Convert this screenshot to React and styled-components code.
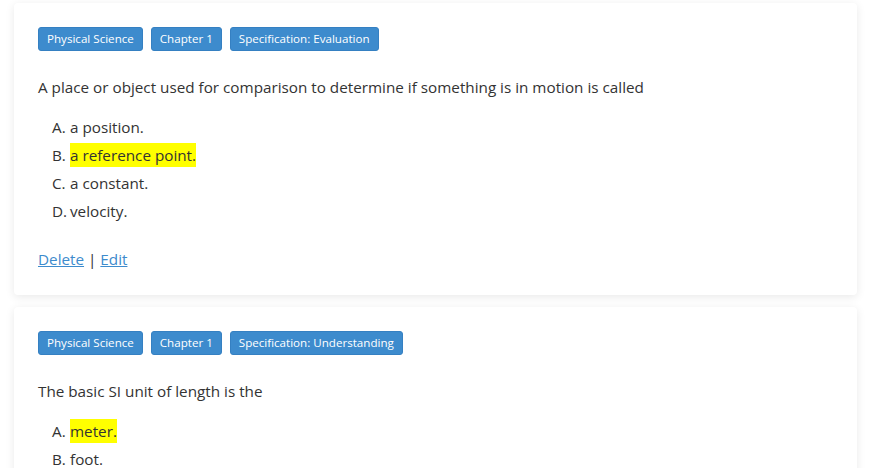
import React from 'react'
import styled, { createGlobalStyle } from 'styled-components'

const GlobalStyle = createGlobalStyle`
  body {
    margin: 0;
    background: #ffffff;
    font-family: "Open Sans", "Noto Sans", sans-serif;
    color: #333333;
  }
`

const questions = [
  {
    tags: ['Physical Science', 'Chapter 1', 'Specification: Evaluation'],
    text: 'A place or object used for comparison to determine if something is in motion is called',
    answers: ['a position.', 'a reference point.', 'a constant.', 'velocity.'],
    correct: 1,
  },
  {
    tags: ['Physical Science', 'Chapter 1', 'Specification: Understanding'],
    text: 'The basic SI unit of length is the',
    answers: ['meter.', 'foot.', 'mile.', 'inch.'],
    correct: 0,
  },
]

const letters = ['A', 'B', 'C', 'D']

const App = () => {
  return (
    <>
      <GlobalStyle />
      <Page>
        {questions.map((q, i) => (
          <Card key={i}>
            <Tags>
              {q.tags.map((t) => (
                <Tag key={t}>{t}</Tag>
              ))}
            </Tags>
            <Question>{q.text}</Question>
            <Answers>
              {q.answers.map((a, j) => (
                <Answer key={j}>
                  <Letter>{letters[j]}.</Letter>
                  <AnswerText $correct={j === q.correct}>{a}</AnswerText>
                </Answer>
              ))}
            </Answers>
            <Actions>
              <Link href="#">Delete</Link> | <Link href="#">Edit</Link>
            </Actions>
          </Card>
        ))}
      </Page>
    </>
  )
}
export default App

const Page = styled.div`
  padding: 3px 19px 20px 14px;
  display: flex;
  flex-direction: column;
  gap: 12px;
`

const Card = styled.div`
  background: #fff;
  border-radius: 4px;
  box-shadow: 0 2px 10px rgba(0, 0, 0, 0.09);
  padding: 24px;
`

const Tags = styled.div`
  display: flex;
  gap: 8px;
`

const Tag = styled.span`
  background: #3d8bcd;
  color: #fff;
  font-size: 11.6px;
  line-height: 22px;
  padding: 0 8px;
  border-radius: 3px;
  border: 1px solid #3580c2;
`

const Question = styled.p`
  font-size: 15.25px;
  margin: 24px 0 16px;
  line-height: 24px;
`

const Answers = styled.ol`
  list-style: none;
  margin: 0;
  padding: 0 0 0 14px;
  display: flex;
  flex-direction: column;
  gap: 4px;
`

const Answer = styled.li`
  font-size: 15.25px;
  line-height: 24px;
  display: flex;
`

const Letter = styled.span`
  width: 18px;
`

const AnswerText = styled.span`
  background: ${(p) => (p.$correct ? '#ffff00' : 'transparent')};
`

const Actions = styled.div`
  margin-top: 24px;
  font-size: 15.25px;
  line-height: 24px;
`

const Link = styled.a`
  color: #3d8bcd;
  text-decoration: underline;
`
